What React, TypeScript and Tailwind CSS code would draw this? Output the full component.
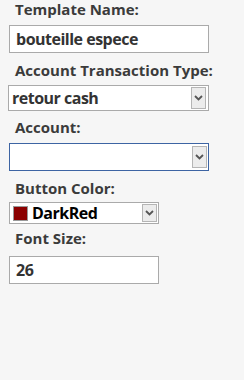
const Chevron = () => (
  <svg width="9" height="6" viewBox="0 0 9 6" className="block">
    <path d="M1 1 L4.5 4.5 L8 1" fill="none" stroke="#555" strokeWidth="1.8" />
  </svg>
);

const DropButton = ({ h }: { h: string }) => (
  <div className={`flex ${h} w-[15px] items-center justify-center border border-[#b5b5b5] bg-[#ececec]`}>
    <Chevron />
  </div>
);

const Label = ({ children, mt }: { children: string; mt: string }) => (
  <div className={`${mt} ml-[6px] h-[18px] text-[15px] leading-[18px] font-bold text-[#3b3b3b]`}>{children}</div>
);

export default function App() {
  return (
    <div
      className="h-[380px] w-[244px] bg-[#f6f6f6] pl-[9px]"
      style={{ fontFamily: '"Open Sans", "Noto Sans", sans-serif' }}
    >
      <Label mt="mt-0">Template Name:</Label>
      <div className="mt-[7px] flex h-[28px] w-[200px] items-center border border-[#aaaaaa] bg-white pl-[6px] text-[16px] font-bold tracking-[-0.5px] text-[#333]">
        bouteille espece
      </div>

      <Label mt="mt-[8px]">Account Transaction Type:</Label>
      <div className="mt-[6px] -ml-px flex h-[26px] w-[201px] items-center justify-between border border-[#aaaaaa] bg-white pl-[3px] pr-[2px] text-[16px] font-bold tracking-[-0.5px] text-[#333]">
        <span>retour cash</span>
        <DropButton h="h-[22px]" />
      </div>

      <Label mt="mt-[7px]">Account:</Label>
      <div className="mt-[7px] flex h-[28px] w-[200px] items-center justify-end border border-[#3d64a3] bg-white pr-[1px]">
        <DropButton h="h-[22px]" />
      </div>

      <Label mt="mt-[8px]">Button Color:</Label>
      <div className="mt-[5px] flex h-[22px] w-[150px] items-center justify-between border border-[#aaaaaa] bg-white pl-[3px] pr-[1px]">
        <div className="flex items-center gap-[4px]">
          <div className="h-[15px] w-[15px] border border-[#999] bg-[#8b0000]" />
          <span className="text-[16px] font-bold leading-none tracking-[-0.5px] text-black">DarkRed</span>
        </div>
        <DropButton h="h-[18px]" />
      </div>

      <Label mt="mt-[5px]">Font Size:</Label>
      <div className="mt-[9px] flex h-[28px] w-[150px] items-center border border-[#aaaaaa] bg-white pl-[6px] text-[16px] font-bold tracking-[-0.5px] text-[#333]">
        26
      </div>
    </div>
  );
}
